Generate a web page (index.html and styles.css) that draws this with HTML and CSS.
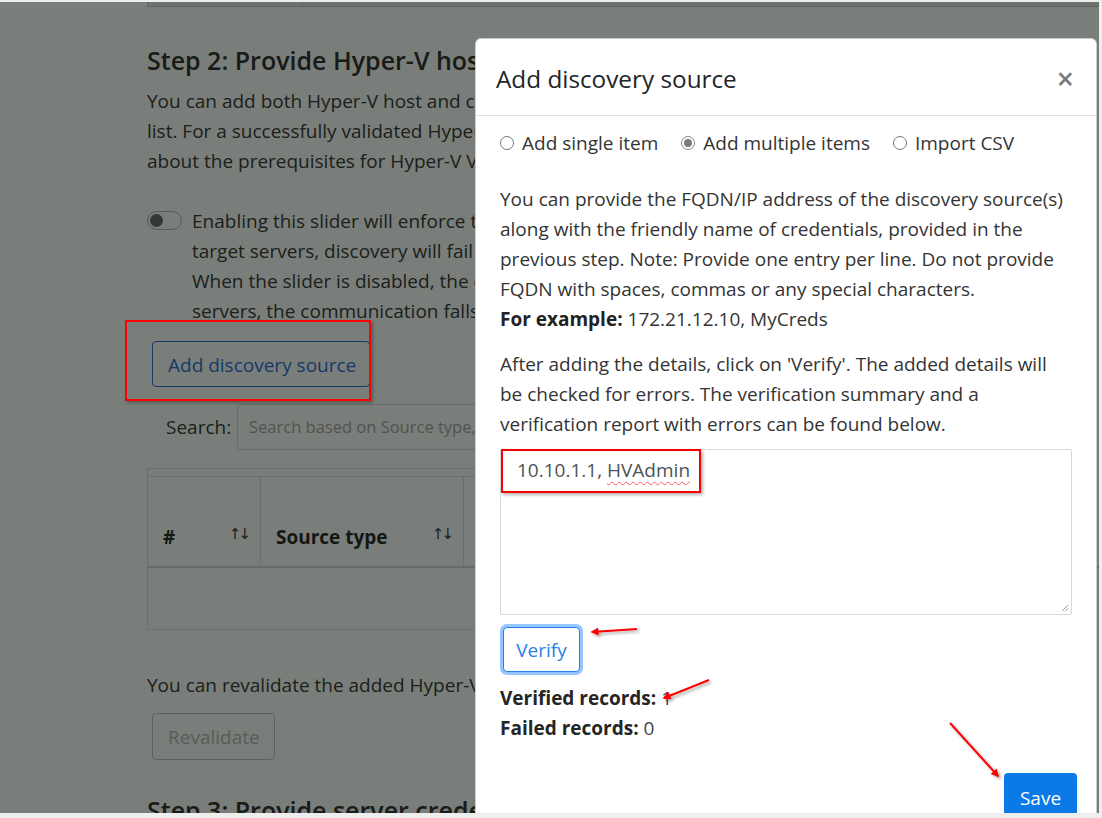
FILE: index.html
```html
<!DOCTYPE html>
<html lang="en">
<head>
<meta charset="utf-8">
<title>Add discovery source</title>
<link rel="stylesheet" href="styles.css">
</head>
<body>
<div class="screen">
  <div class="page">
    <div class="prev-table"><div class="pt-cell pt-first"></div><div class="pt-cell pt-wide"></div></div>
    <h2 class="step-title">Step 2: Provide Hyper-V host/cluster details</h2>
    <p class="step-desc">You can add both Hyper-V host and cluster details, provided the credentials are in the<br>list. For a successfully validated Hyper-V cluster, the hosts will be added automatically. Learn more<br>about the prerequisites for Hyper-V VM discovery.</p>
    <div class="toggle-row">
      <span class="toggle"><span class="knob"></span></span>
      <p class="toggle-text">Enabling this slider will enforce the use of HTTPS for communication with the<br>target servers, discovery will fail if HTTPS is not configured on the servers.<br>When the slider is disabled, the communication is attempted over HTTPS and for<br>servers, the communication falls back to HTTP when HTTPS fails.</p>
    </div>
    <button class="btn-add" type="button">Add discovery source</button>
    <div class="search-row">
      <span class="search-label">Search:</span>
      <div class="search-input">Search based on Source type, IP address/FQDN or friendly name</div>
    </div>
    <div class="table">
      <div class="thead">
        <div class="th th-num"><span>#</span><span class="sort">↑↓</span></div>
        <div class="th th-type"><span>Source type</span><span class="sort">↑↓</span></div>
        <div class="th th-rest"><span>IP Address/FQDN</span><span class="sort">↑↓</span></div>
      </div>
      <div class="tbody-row"></div>
    </div>
    <p class="reval">You can revalidate the added Hyper-V hosts and clusters using the option below.</p>
    <button class="btn-disabled" type="button">Revalidate</button>
    <h2 class="step-title step3">Step 3: Provide server credentials to perform software inventory</h2>
  </div>

  <div class="backdrop"></div>

  <div class="modal">
    <div class="modal-header">
      <h5 class="modal-title">Add discovery source</h5>
      <span class="close">×</span>
    </div>
    <div class="modal-body">
      <div class="radio-row">
        <span class="radio-item"><span class="radio"></span>Add single item</span>
        <span class="radio-item"><span class="radio checked"></span>Add multiple items</span>
        <span class="radio-item"><span class="radio"></span>Import CSV</span>
      </div>
      <p class="text p1">You can provide the FQDN/IP address of the discovery source(s) along with the friendly name of credentials, provided in the previous step. Note: Provide one entry per line. Do not provide FQDN with spaces, commas or any special characters.<br><strong>For example:</strong> 172.21.12.10, MyCreds</p>
      <p class="text p2">After adding the details, click on 'Verify'. The added details will be checked for errors. The verification summary and a verification report with errors can be found below.</p>
      <div class="textarea">10.10.1.1, <span class="spell">HVAdmin</span>
        <svg class="grip" width="8" height="8" viewBox="0 0 8 8"><path d="M7 1 L1 7 M7 4.5 L4.5 7" stroke="#9a9a9a" stroke-width="1" fill="none"/></svg>
      </div>
      <button class="btn-verify" type="button">Verify</button>
      <div class="records">
        <div><strong>Verified records:</strong> 1</div>
        <div><strong>Failed records:</strong> 0</div>
      </div>
    </div>
    <div class="modal-footer">
      <button class="btn-save" type="button">Save</button>
    </div>
  </div>

  <div class="annot box-add"></div>
  <div class="annot box-text"></div>

  <svg class="arrows" width="1099" height="811" viewBox="0 0 1099 811">
    <defs>
      <filter id="sh" x="-30%" y="-30%" width="160%" height="160%">
        <feDropShadow dx="2" dy="2" stdDeviation="1.5" flood-color="#000" flood-opacity="0.35"/>
      </filter>
      <marker id="ah" viewBox="0 0 10 10" refX="8" refY="5" markerWidth="5" markerHeight="4" orient="auto">
        <path d="M0,0 L10,5 L0,10 z" fill="#ff0000"/>
      </marker>
    </defs>
    <g filter="url(#sh)" stroke="#ff0000" stroke-width="2" fill="none">
      <line x1="637" y1="627" x2="592" y2="630" marker-end="url(#ah)"/>
      <line x1="709" y1="678" x2="664" y2="696" marker-end="url(#ah)"/>
      <line x1="950" y1="721" x2="998" y2="774" marker-end="url(#ah)"/>
    </g>
  </svg>
</div>
</body>
</html>
```
FILE: styles.css
```css
* { box-sizing: border-box; }

body {
  margin: 0;
  background: #eeeeee;
  font-family: "Open Sans", "Noto Sans", sans-serif;
}

.screen {
  position: relative;
  width: 1099px;
  height: 811px;
  margin-top: 2px;
  overflow: hidden;
  background: #ffffff;
}

/* ---------- underlying page ---------- */
.page {
  width: 1400px;
  padding-left: 147px;
  color: #3b3a39;
  font-size: 19px;
  line-height: 30px;
}

.prev-table {
  display: flex;
  width: 1000px;
  height: 5px;
  background: #e9e9e9;
  border-left: 1px solid #d6d6d6;
  border-bottom: 1px solid #c9c9c9;
}
.pt-cell { height: 100%; }
.pt-first { width: 155px; border-right: 1px solid #d0d0d0; }
.pt-wide { flex: 1; }

.step-title {
  margin: 38px 0 0;
  font-size: 25px;
  font-weight: 600;
  line-height: 30px;
  color: #323130;
  white-space: nowrap;
}
.step3 { margin-top: 35px; }

.step-desc {
  margin: 11px 0 0;
  white-space: nowrap;
}

.toggle-row {
  display: flex;
  gap: 10px;
  margin-top: 30px;
}
.toggle {
  flex: none;
  display: flex;
  align-items: center;
  width: 35px;
  height: 19px;
  margin-top: 5px;
  padding-left: 2px;
  border: 1.5px solid #b4b4b4;
  border-radius: 10px;
}
.knob {
  width: 13px;
  height: 13px;
  border-radius: 50%;
  background: #6e6e6e;
}
.toggle-text {
  margin: 0;
  white-space: nowrap;
}

.btn-add {
  display: block;
  width: 218px;
  height: 46px;
  margin: 15px 0 0 5px;
  padding: 1px 0 0 15px;
  text-align: left;
  background: #ffffff;
  color: #2f6fd8;
  border: 1px solid #2f6fd8;
  border-radius: 4px;
  font: 19px/30px "Open Sans", sans-serif;
}

.search-row {
  display: flex;
  align-items: center;
  margin-top: 17px;
  padding-left: 19px;
}
.search-label { width: 71px; flex: none; }
.search-input {
  width: 800px;
  height: 46px;
  padding-left: 11px;
  border: 1px solid #d8d8d8;
  border-radius: 4px;
  color: #a8a8a8;
  font-size: 16.5px;
  line-height: 44px;
  white-space: nowrap;
}

.table {
  width: 1000px;
  margin-top: 18px;
  padding-top: 7px;
  border: 1px solid #dee2e6;
}
.thead {
  display: flex;
  height: 92px;
  border-top: 1px solid #dee2e6;
  border-bottom: 2px solid #d4d8dc;
}
.th {
  display: flex;
  align-items: flex-end;
  justify-content: space-between;
  padding: 0 12px 14px 15px;
  border-right: 1px solid #dee2e6;
  font-weight: 700;
  color: #2b2a29;
}
.th-num { width: 113px; }
.th-type { width: 203px; }
.th-rest { width: 300px; }
.sort {
  font-family: "DejaVu Sans", sans-serif;
  font-weight: 400;
  font-size: 15px;
  letter-spacing: -3px;
  color: #3b3a39;
  position: relative;
  top: -3px;
}
.tbody-row { height: 61px; }

.reval {
  margin: 40px 0 0;
  white-space: nowrap;
}

.btn-disabled {
  display: block;
  width: 123px;
  height: 47px;
  margin: 13px 0 0 5px;
  padding: 0 0 0 15px;
  text-align: left;
  background: #ffffff;
  color: #b8b8b8;
  border: 1px solid #c2c2c2;
  border-radius: 4px;
  font: 19px/30px "Open Sans", sans-serif;
}

/* ---------- backdrop ---------- */
.backdrop {
  position: absolute;
  inset: 0;
  background: rgba(0, 7, 0, 0.52);
}

/* ---------- modal ---------- */
.modal {
  position: absolute;
  left: 475px;
  top: 36px;
  width: 622px;
  height: 800px;
  background: #ffffff;
  border: 1px solid rgba(0, 0, 0, 0.2);
  border-radius: 6px;
  overflow: hidden;
  font-size: 19px;
  line-height: 30px;
  color: #343434;
}

.modal-header {
  display: flex;
  align-items: center;
  justify-content: space-between;
  height: 77px;
  padding: 3px 22px 0 20px;
  border-bottom: 1px solid #dee2e6;
}
.modal-title {
  margin: 0;
  font-size: 24.3px;
  font-weight: 500;
  line-height: 30px;
  color: #212529;
}
.close {
  font-size: 30px;
  font-weight: 600;
  line-height: 30px;
  color: #7a7a7a;
}

.modal-body {
  padding: 12px 24px 0 24px;
}

.radio-row {
  display: flex;
  align-items: center;
  height: 30px;
}
.radio-item {
  display: flex;
  align-items: center;
  margin-right: 23px;
}
.radio {
  display: flex;
  align-items: center;
  justify-content: center;
  width: 14px;
  height: 14px;
  margin-right: 8px;
  border: 1px solid #767676;
  border-radius: 50%;
  background: #ffffff;
}
.radio.checked { border-color: #8a8a8a; }
.radio.checked::after {
  content: "";
  width: 8px;
  height: 8px;
  border-radius: 50%;
  background: #7c7c7c;
}

.text { margin: 0; }
.p1 { margin-top: 26px; }
.p2 { margin-top: 15px; }
.text strong { color: #222; font-weight: 700; }

.textarea {
  position: relative;
  height: 166px;
  margin-top: 10px;
  padding: 5px 16px 0;
  border: 1px solid #d3dae0;
  border-radius: 2px;
  color: #4d5358;
}
.spell {
  text-decoration: underline wavy #ff5a5a;
  text-decoration-thickness: 1px;
  text-underline-offset: 4px;
}
.grip {
  position: absolute;
  right: 2px;
  bottom: 2px;
}

.btn-verify {
  display: block;
  width: 77px;
  height: 45px;
  margin: 12px 0 0 3px;
  padding: 0;
  background: #ffffff;
  color: #2a7fe6;
  border: 1px solid #2a7fe6;
  border-radius: 4px;
  box-shadow: 0 0 0 3px rgba(64, 150, 255, 0.55);
  font: 19px/30px "Open Sans", sans-serif;
}

.records {
  margin-top: 11px;
  color: #444;
}
.records strong { color: #252525; font-weight: 700; }

.modal-footer {
  display: flex;
  justify-content: flex-end;
  padding: 30px 19px 0 0;
}
.btn-save {
  width: 73px;
  height: 50px;
  padding: 0;
  background: #0b7ae6;
  color: #ffffff;
  border: none;
  border-radius: 4px;
  font: 19px/30px "Open Sans", sans-serif;
}

/* ---------- annotations ---------- */
.annot {
  position: absolute;
  border: 2px solid #ff0000;
  box-shadow: 2px 2px 3px rgba(0, 0, 0, 0.3);
}
.box-add { left: 125px; top: 318px; width: 246px; height: 81px; }
.box-text { left: 501px; top: 447px; width: 200px; height: 44px; }

.arrows {
  position: absolute;
  left: 0;
  top: 0;
  pointer-events: none;
}
```
